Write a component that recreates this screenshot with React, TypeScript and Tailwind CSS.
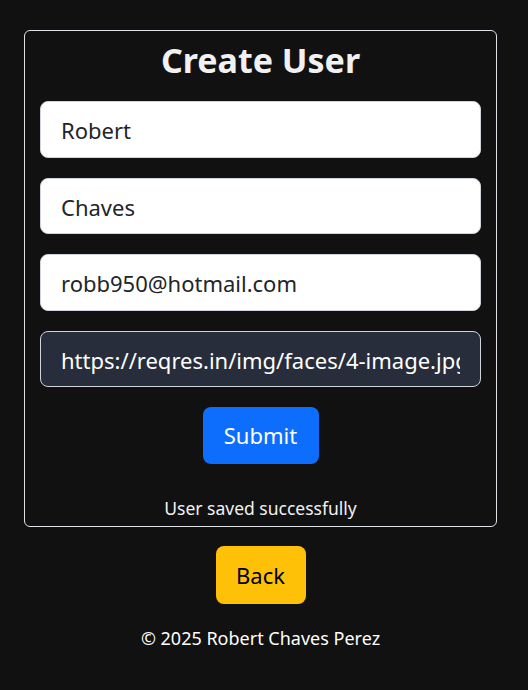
export default function App() {
  return (
    <div className="min-h-[690px] bg-[#111111] pl-6 pt-[30px] font-['Noto_Sans',sans-serif] text-[#f1f1f1]">
      <div className="w-[473px]">
        {/* Card */}
        <div className="flex flex-col rounded-md border border-[#dee2e6] px-[15px] pb-[6px]">
          <h1 className="mt-[5px] text-center text-[34px] font-bold leading-[48px] text-[#f1f1f1]">Create User</h1>
          <form className="mt-[17px] flex flex-col gap-5">
            <input
              readOnly
              value="Robert"
              className="h-[56.5px] w-full rounded-lg border border-[#ced4da] bg-white px-5 pt-[2px] text-[22px] text-[#212529] outline-none"
            />
            <input
              readOnly
              value="Chaves"
              className="h-[56.5px] w-full rounded-lg border border-[#ced4da] bg-white px-5 pt-[2px] text-[22px] text-[#212529] outline-none"
            />
            <input
              readOnly
              value="robb950@hotmail.com"
              className="h-[56.5px] w-full rounded-lg border border-[#ced4da] bg-white px-5 pt-[2px] text-[22px] text-[#212529] outline-none"
            />
            <input
              readOnly
              value="https://reqres.in/img/faces/4-image.jpg"
              className="h-[56.5px] w-full rounded-lg border border-[#ced4da] bg-[#272d3a] px-5 pt-[2px] text-[22px] text-white outline-none"
            />
            <div className="flex justify-center">
              <button type="button" className="h-[57px] w-[116px] rounded-lg bg-[#0d6efd] text-[22px] text-white">
                Submit
              </button>
            </div>
          </form>
          <p className="mt-[32px] text-center text-[17.5px] leading-6 text-[#f1f1f1]">User saved successfully</p>
        </div>

        <div className="mt-[19px] flex justify-center">
          <button type="button" className="h-[58px] w-[90px] rounded-lg bg-[#ffc107] text-[22px] text-black">
            Back
          </button>
        </div>
        <p className="mt-[21px] text-center text-[18px] text-white">© 2025 Robert Chaves Perez</p>
      </div>
    </div>
  );
}
